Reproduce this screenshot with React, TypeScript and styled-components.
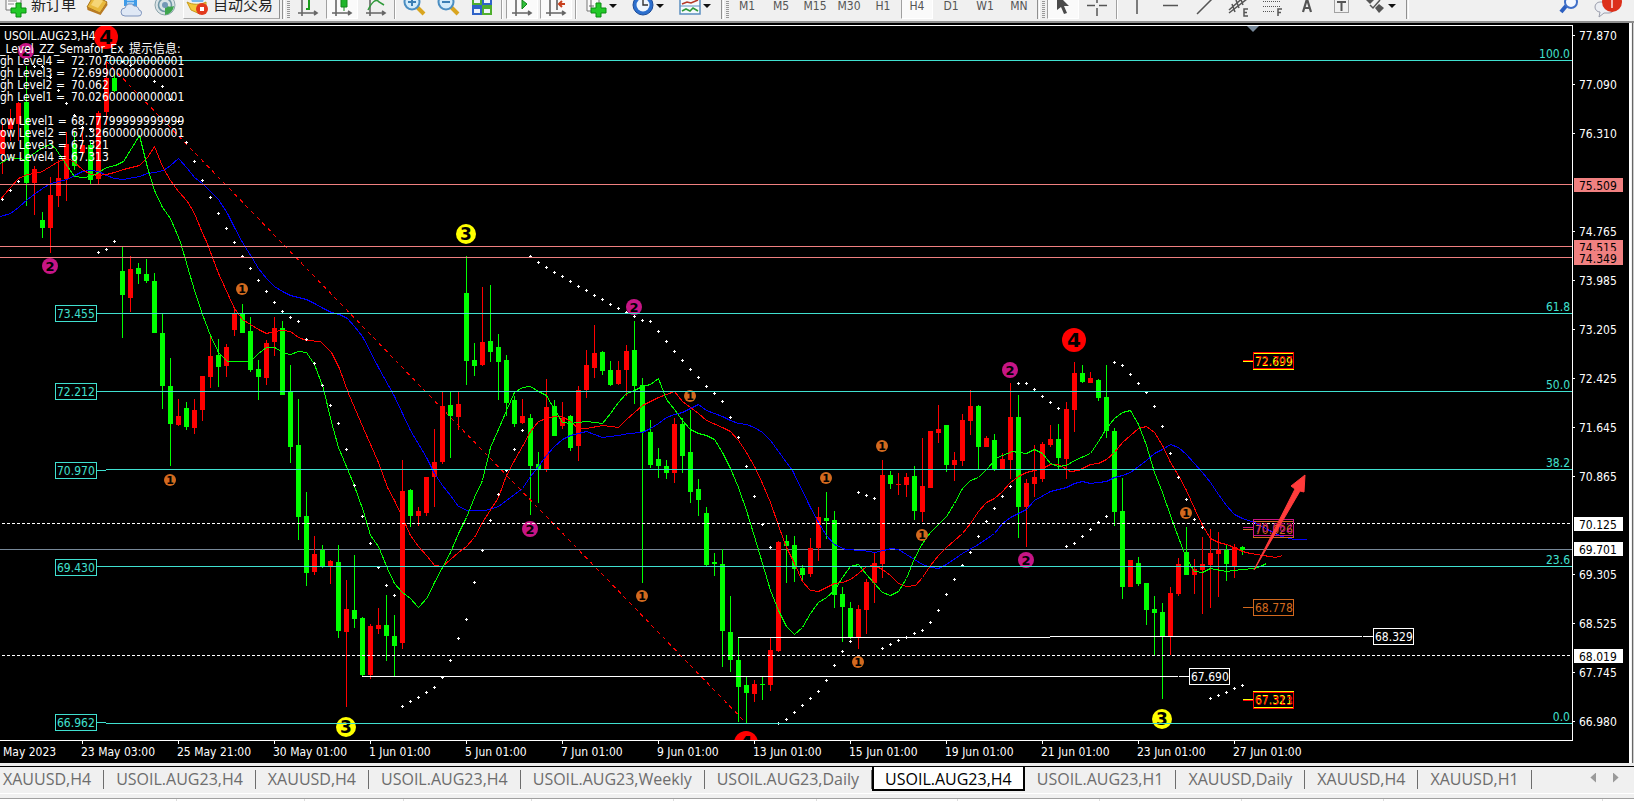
import React from "react";
import styled, { createGlobalStyle, css } from "styled-components";

const GlobalStyle = createGlobalStyle`
  * { box-sizing: border-box; }
  html, body, #root { height: 100%; }
  body { margin: 0; background: #f0f0f0; overflow: hidden; }
  button { font: inherit; color: inherit; }
`;

const UI_FONT = `"DejaVu Sans Condensed", "Noto Sans", "Noto Sans CJK SC", sans-serif`;

/* ---------- window frame ---------- */

const Window = styled.div`
  display: flex;
  flex-direction: column;
  min-height: 100vh;
  background: #f0f0f0;
  overflow: hidden;
`;

const Workspace = styled.main`
  display: grid;
  grid-template-columns: minmax(0, 1fr) 5px;
`;

const Edge = styled.div`
  background: linear-gradient(to right, #fff 0 2px, #f0f0f0 2px 3px, #666 3px 4px, #ccc 4px 5px);
`;

/* ---------- toolbar ---------- */

const Toolbar = styled.header`
  display: flex;
  align-items: flex-end;
  gap: 2px;
  height: 23px;
  padding-bottom: 2px;
  overflow: hidden;
  background: #f0f0f0;
  border-bottom: 2px solid #8f8f8f;
  font-family: ${UI_FONT};
  font-size: 12px;
  color: #555;
`;

const ToolButton = styled.button<{ $pressed?: boolean; $size?: "icon" | "menu" | "order" | "auto" }>`
  display: flex;
  align-items: center;
  justify-content: ${(p) => (p.$size === "icon" || !p.$size ? "center" : "flex-start")};
  flex: none;
  gap: ${(p) => (p.$size === "order" || p.$size === "auto" ? "3px" : "1px")};
  width: ${(p) => ({ icon: "32px", menu: "45px", order: "79px", auto: "97px" })[p.$size ?? "icon"]};
  height: 26px;
  padding: 0 4px;
  border: 0;
  background: none;
  ${(p) =>
    p.$size === "auto" &&
    css`
      border-right: 1px solid #8f8f8f;
      border-bottom: 1px solid #a8a8a8;
      border-left: 1px solid #fff;
      padding: 0 2px;
    `}
  ${(p) =>
    p.$pressed &&
    css`
      background: #fafafa;
      border-left: 1px solid #a0a0a0;
      border-right: 1px solid #fff;
      border-bottom: 1px solid #fff;
    `}
`;

const Caption = styled.span`
  font-family: "Noto Sans CJK SC", sans-serif;
  font-size: 15px;
  line-height: 20px;
  padding-bottom: 4px;
  color: #222;
  white-space: nowrap;
`;

const Separator = styled.span<{ $wide?: boolean }>`
  flex: none;
  width: 2px;
  height: 26px;
  margin: 0 ${(p) => (p.$wide ? 1 : 0)}px;
  border-left: 1px solid #a0a0a0;
  border-right: 1px solid #fff;
`;

const GroupEnd = styled.span`
  flex: none;
  width: 3px;
  height: 28px;
  border-left: 1px solid #909090;
  border-right: 1px solid #fff;
`;

const Grip = styled.span`
  flex: none;
  width: 3px;
  height: 26px;
  background: repeating-linear-gradient(to bottom, #999 0 1px, #f0f0f0 1px 2px);
`;

const Caret = styled.span`
  border: 4px solid transparent;
  border-top-color: #111;
  border-bottom: 0;
`;

const StatusTools = styled.div`
  display: flex;
  gap: 6px;
  margin-left: auto;
  padding-right: 12px;
`;

const IconSvg = styled.svg`
  display: block;
  flex: none;
  width: 24px;
  height: 24px;
`;

const Axes = () => (
  <path d="M6 0V22M2 19H20M18 17l3 2-3 2" fill="none" stroke="#666" strokeWidth="1.6" />
);

const icons = {
  order: (
    <>
      <path d="M2 0h11l4 4v12H2z" fill="#fafafa" stroke="#777" />
      <path d="M4 4h6M4 7h9M4 10h6" stroke="#888" />
      <path d="M12 9h5v5h5v5h-5v4h-5v-4H7v-5h5z" fill="#22c928" stroke="#0b8c12" />
    </>
  ),
  book: (
    <>
      <path d="M2 13L9 1l13 7-7 11z" fill="#e8b93c" stroke="#a8741a" />
      <path d="M2 13l13 6 7-11 .5 3-7 10L2.500 16z" fill="#b97a22" />
      <path d="M6 11l5-8 7 4-5 7z" fill="#f5d676" />
    </>
  ),
  cloud: (
    <>
      <path d="M5 0h13v12H5z" fill="#3f9be8" />
      <path d="M8 3h7M8 6h7M8 9h7" stroke="#fff" />
      <path d="M6 22a4 4 0 010-8 5 5 0 019-2 5 5 0 015 4 3 3 0 01-1 6z" fill="#dfe8f5" stroke="#7f95bd" />
    </>
  ),
  signal: (
    <>
      <circle cx="12" cy="11" r="10" fill="#d9e3e6" stroke="#8ba3aa" />
      <circle cx="12" cy="11" r="6.500" fill="none" stroke="#6f96a5" strokeWidth="1.600" />
      <path d="M12 11v10a10 10 0 009-9c-3 1-6 1-9-1z" fill="#3fa54e" />
      <circle cx="12" cy="11" r="3" fill="#7398b6" />
    </>
  ),
  auto: (
    <>
      <path d="M3 0h17l-3 8H6z" fill="#79b7ea" />
      <path d="M1 8c5 3 14 3 19 0v5l-6 7-9-4z" fill="#f3c83c" stroke="#c79a1a" />
      <circle cx="16" cy="15" r="6" fill="#e23a1e" />
      <path d="M14 13h4v4h-4z" fill="#fff" />
    </>
  ),
  bars: (
    <>
      <Axes />
      <path d="M13 2v14M13 5h4M10 15h3" stroke="#1a9b1a" strokeWidth="2" />
    </>
  ),
  candles: (
    <>
      <Axes />
      <path d="M14 0v17" stroke="#14841a" />
      <path d="M11 1h6v12h-6z" fill="#1fb52a" stroke="#14841a" />
    </>
  ),
  line: (
    <>
      <Axes />
      <path d="M4 16c4-8 8-12 11-8l5 3" fill="none" stroke="#2f9a3a" strokeWidth="1.500" />
    </>
  ),
  zoomIn: (
    <>
      <path d="M15 13l7 7" stroke="#d9a520" strokeWidth="4" />
      <circle cx="10" cy="8" r="7.500" fill="#d3ecfb" stroke="#4b8ec2" strokeWidth="2" />
      <path d="M6 8h8M10 4v8" stroke="#3b7fb5" strokeWidth="2" />
    </>
  ),
  zoomOut: (
    <>
      <path d="M15 13l7 7" stroke="#d9a520" strokeWidth="4" />
      <circle cx="10" cy="8" r="7.500" fill="#d3ecfb" stroke="#4b8ec2" strokeWidth="2" />
      <path d="M6 8h8" stroke="#3b7fb5" strokeWidth="2" />
    </>
  ),
  tile: (
    <>
      <path d="M2 1h10v10H2zM12 11h10v10H12z" fill="#4fae2e" />
      <path d="M12 1h10v10H12zM2 11h10v10H2z" fill="#2f62c8" />
      <path d="M4 6h6v3H4zM14 6h6v3h-6zM4 15h6v4H4zM14 15h6v4h-6z" fill="#eef4fb" />
    </>
  ),
  scroll: (
    <>
      <Axes />
      <path d="M12 6v9l5-5z" fill="#2fbf3a" stroke="#14841a" />
    </>
  ),
  shift: (
    <>
      <Axes />
      <path d="M13 2v14" stroke="#555" strokeWidth="1.500" />
      <path d="M21 10h-5M18 7l-3 3 3 3" fill="none" stroke="#c8401e" strokeWidth="2" />
    </>
  ),
  indicator: (
    <>
      <path d="M3 0h12v17H3z" fill="#fafafa" stroke="#777" />
      <path d="M7 2v12M5 12h5" stroke="#666" />
      <path d="M12 9h5v5h5v5h-5v4h-5v-4H7v-5h5z" fill="#22c928" stroke="#0b8c12" />
    </>
  ),
  clock: (
    <>
      <circle cx="12" cy="11" r="10" fill="#2c6fce" stroke="#1d4c98" />
      <circle cx="12" cy="11" r="6.500" fill="#eef5fc" />
      <path d="M12 6v5h5" fill="none" stroke="#333" strokeWidth="1.400" />
    </>
  ),
  template: (
    <>
      <path d="M2 1h20v19H2z" fill="#f5fafd" stroke="#5b8fc0" strokeWidth="1.500" />
      <path d="M4 10l5-2 4 1 7-3" fill="none" stroke="#b53a28" strokeWidth="1.600" />
      <path d="M2 12h20" stroke="#5b8fc0" />
      <path d="M4 17l4-2 4 2 3-3 5 3" fill="none" stroke="#2f9a3a" strokeWidth="1.600" />
    </>
  ),
  cursor: <path d="M6 0v16l4-3 3 7 3-1-3-7h5z" fill="#4a4a4a" />,
  cross: <path d="M12 0v9M12 14v8M2 11.500h8M14 11.500h8" stroke="#555" strokeWidth="1.500" />,
  vline: <path d="M12 0v20" stroke="#555" strokeWidth="1.500" />,
  hline: <path d="M4 11.500h15" stroke="#555" strokeWidth="1.500" />,
  diagonal: <path d="M4 20L20 4" stroke="#555" strokeWidth="1.500" />,
  channel: (
    <>
      <path d="M2 16L18 2M2 19L20 5M5 10l3 8M9 6l3 8M13 3l3 8" stroke="#555" strokeWidth="1.500" />
      <path d="M21 15h-4v7h4M17 18.500h3" fill="none" stroke="#555" strokeWidth="1.500" />
    </>
  ),
  fibo: (
    <>
      <path d="M2 7.500h18M2 12.500h18M2 17.500h12" stroke="#555" strokeDasharray="1 1" />
      <path d="M21 15h-4v7M17 18.500h3" fill="none" stroke="#555" strokeWidth="1.500" />
    </>
  ),
  letter: <path d="M8 18l4-13 4 13M9 14h6" fill="none" stroke="#555" strokeWidth="2.200" />,
  label: (
    <>
      <rect x="5.500" y="4.500" width="14" height="14" fill="none" stroke="#555" strokeDasharray="1 1" />
      <path d="M8 8h9M12.500 8v9" stroke="#555" strokeWidth="2" />
    </>
  ),
  arrows: (
    <>
      <path d="M7 2l4 4-4 4-4-4zM16 10l5 4-5 5-4-5z" fill="#555" />
      <path d="M7 11l3 3 7-8" fill="none" stroke="#555" strokeWidth="1.500" />
    </>
  ),
  search: (
    <>
      <path d="M10 12l-5 6" stroke="#2c5fc0" strokeWidth="4" />
      <circle cx="15" cy="8" r="6" fill="#f4f8ff" stroke="#3f6fc8" strokeWidth="2" />
    </>
  ),
  alert: (
    <>
      <path d="M6 8h9a5 5 0 010 11h-5l-5 4 1-5a5 5 0 010-10z" fill="#eceef3" stroke="#9a9dab" />
      <circle cx="18" cy="8" r="10" fill="#dc2f1a" />
      <path d="M17 4h1v10" fill="none" stroke="#fff" strokeWidth="1.300" />
    </>
  ),
};

type IconName = keyof typeof icons;

const Icon = ({ name }: { name: IconName }) => (
  <IconSvg viewBox="0 0 24 24" aria-hidden="true" overflow="visible">
    {icons[name]}
  </IconSvg>
);

const Tool = ({ icon, pressed, menu }: { icon: IconName; pressed?: boolean; menu?: boolean }) => (
  <ToolButton type="button" aria-label={icon} $pressed={pressed} $size={menu ? "menu" : "icon"}>
    <Icon name={icon} />
    {menu && <Caret />}
  </ToolButton>
);

const TIMEFRAMES = ["M1", "M5", "M15", "M30", "H1", "H4", "D1", "W1", "MN"];

/* ---------- chart ---------- */

const TURQUOISE = "#40e0d0";
const SALMON = "#f08080";
const SLATE = "#778899";
const CHOCOLATE = "#d2691e";
const VIOLET = "#c71585";

const Chart = styled.svg`
  display: block;
  width: 100%;
  height: auto;
  background: #000;
  font-family: ${UI_FONT};
  font-size: 12px;
  fill: #fff;
`;

const ChartText = styled.text`
  white-space: pre;
`;

const MarkDigit = styled.text`
  font-family: "DejaVu Sans", sans-serif;
  font-weight: 700;
  text-anchor: middle;
  fill: #000;
`;

type Candle = [up: 0 | 1, high: number, top: number, bottom: number, low: number];

/* one entry per bar, eight pixels apart; 1 = rising (red), 0 = falling (green) */
const CANDLES: Candle[] = [
  [1,122,130,154,174],[1,109,119,129,141],[1,102,103,124,141],[0,66,102,183,206],[1,166,169,183,215],
  [0,212,220,228,238],[1,177,195,228,253],[1,160,178,196,207],[1,132,144,179,201],[0,132,144,166,170],
  [1,128,145,153,157],[0,141,145,180,184],[1,111,113,179,184],[1,61,78,112,125],[0,73,78,91,92],
  [0,247,271,295,338],[1,256,269,298,312],[0,263,268,274,284],[0,259,274,281,283],[0,273,281,333,333],
  [0,314,333,386,409],[0,358,386,424,466],[1,399,416,425,426],[0,402,408,427,430],[1,399,410,428,434],
  [1,376,376,410,421],[1,335,356,377,388],[0,339,355,367,387],[1,344,347,366,377],[1,309,314,330,336],
  [0,304,314,333,333],[0,317,331,370,372],[0,360,369,377,400],[1,340,343,378,385],[1,317,328,342,356],
  [0,321,328,395,395],[0,365,392,447,463],[0,399,445,517,540],[0,492,516,573,586],[1,536,554,572,575],
  [0,545,550,566,568],[1,560,561,566,584],[0,545,562,631,638],[1,580,609,632,707],[0,555,610,619,628],
  [0,617,618,675,676],[1,624,626,675,679],[1,608,625,629,634],[0,595,625,636,661],[0,615,636,646,676],
  [1,460,491,643,649],[0,489,490,516,527],[1,507,511,516,526],[1,477,477,513,516],[1,429,462,477,507],
  [1,392,406,462,464],[0,392,405,416,458],[1,392,404,417,430],[0,256,293,361,385],[0,343,360,366,376],
  [1,287,342,365,366],[0,285,341,352,362],[0,334,347,362,400],[0,355,360,403,416],[0,396,400,424,427],
  [1,399,416,423,424],[0,414,418,466,515],[0,452,464,470,503],[1,379,407,470,472],[0,400,406,436,436],
  [1,402,418,426,429],[0,415,416,448,451],[1,386,390,446,461],[1,350,365,390,398],[1,325,353,368,378],
  [0,351,352,371,375],[0,361,370,385,386],[1,361,370,384,385],[1,345,351,370,396],[0,321,350,386,404],
  [0,378,385,432,583],[0,420,432,465,468],[0,448,459,466,478],[0,460,466,473,479],[1,418,424,473,483],
  [0,418,424,456,473],[0,410,452,492,503],[0,479,489,500,516],[0,507,513,565,566],[0,553,562,564,576],
  [0,549,564,631,667],[0,596,632,660,672],[0,637,660,687,722],[0,677,685,693,723],[1,680,684,694,702],
  [0,677,684,685,700],[1,638,650,685,691],[1,541,542,651,652],[0,535,541,546,583],[0,536,545,569,582],
  [0,565,568,575,582],[1,538,548,574,577],[1,507,517,548,561],[0,492,518,521,539],[0,511,520,595,608],
  [0,587,594,607,642],[0,602,608,637,639],[1,605,609,637,649],[1,579,582,610,634],[1,553,563,583,603],
  [1,460,475,564,578],[0,471,475,484,489],[1,473,484,485,495],[1,473,477,485,497],[0,466,476,511,520],
  [1,438,486,512,522],[1,431,431,488,488],[1,405,429,433,443],[0,425,425,465,472],[1,452,460,465,481],
  [1,414,420,461,466],[1,390,406,421,435],[0,405,406,447,469],[1,436,438,447,447],[0,434,440,470,471],
  [1,453,459,469,469],[1,383,417,460,479],[0,395,417,507,538],[1,479,483,507,547],[1,445,477,484,497],
  [1,442,444,479,482],[1,425,439,445,447],[0,424,439,458,469],[1,402,409,459,479],[1,362,373,410,432],
  [0,365,373,382,383],[1,372,378,383,383],[0,379,380,398,401],[0,365,397,431,438],[0,428,431,512,526],
  [0,478,511,587,599],[1,560,560,587,587],[0,557,563,584,586],[0,583,583,610,625],[0,596,609,613,655],
  [0,603,612,636,699],[1,587,593,636,655],[1,558,564,594,596],[0,527,552,575,575],[1,559,569,575,594],
  [1,537,564,570,614],[1,529,553,565,608],[1,532,550,554,597],[0,544,550,564,581],[1,544,547,566,578],
  [0,546,547,550,555],
];

const AVERAGES = [
  {
    color: "#0000ff",
    points:
      "0,216 10,213 18,207 27,199 35,193 42,188 50,183 67,179 74,175 82,171 90,170 98,171 106,175 114,178 123,179 139,176 147,173 154,172 163,170 170,165 178,158 187,168 194,177 202,183 210,191 218,199 227,213 234,227 242,242 252,258 258,268 266,278 274,286 282,291 290,295 298,297 306,299 314,303 323,308 331,312 339,314 347,318 354,326 362,336 378,367 394,396 410,430 426,457 434,473 442,485 450,495 458,506 467,510 485,510 498,506 506,500 514,494 522,488 530,476 538,466 546,455 554,446 562,439 570,435 578,433 586,431 594,434 602,437 610,436 618,435 628,433 642,432 650,428 658,423 666,417 674,414 682,412 690,408 698,404 706,410 714,413 722,416 730,420 738,423 746,424 754,427 762,432 770,440 778,451 786,462 792,470 810,507 818,522 826,535 834,544 845,549 862,550 874,552 883,550 891,548 898,549 906,554 914,559 922,564 930,567 938,568 946,564 962,553 978,544 994,533 1002,523 1010,517 1026,509 1034,500 1050,491 1066,487 1074,483 1082,481 1090,483 1106,481 1114,477 1122,475 1130,472 1138,466 1146,460 1154,453 1162,449 1170,444 1178,447 1186,454 1194,463 1202,472 1210,482 1218,494 1226,505 1234,514 1242,518 1254,522 1267,529 1281,536 1294,539 1306,539",
  },
  {
    color: "#ff0000",
    points:
      "0,199 10,187 18,178 27,174 40,172 50,166 60,160 68,158 74,162 82,169 90,174 98,175 106,174 114,172 123,169 139,165 147,157 154,146 162,166 170,180 178,191 187,201 194,213 203,235 206,241 218,273 234,308 242,319 250,324 258,329 266,333 274,331 282,330 290,331 298,337 306,340 320,341 331,352 339,368 348,393 363,428 378,462 387,487 394,500 402,517 410,535 418,546 427,556 434,565 442,566 450,559 458,552 466,546 474,537 482,522 498,497 506,475 514,460 522,446 530,431 538,421 546,418 554,416 562,416 570,421 578,428 586,428 602,425 618,427 626,419 634,412 642,405 650,401 658,397 674,391 682,401 690,407 698,413 706,420 722,427 730,431 738,440 746,452 754,466 762,483 770,502 778,525 786,547 794,563 802,581 810,590 818,591 834,583 842,582 850,579 858,573 866,566 874,565 882,569 890,575 898,583 906,586 915,585 922,577 930,565 938,555 946,547 962,533 970,523 978,511 986,502 994,498 1002,491 1010,482 1018,476 1026,472 1034,470 1042,468 1050,464 1058,464 1063,467 1070,471 1078,470 1090,464 1098,463 1106,459 1114,452 1122,442 1130,435 1138,428 1146,426 1154,432 1162,445 1170,462 1178,475 1186,490 1194,508 1202,525 1210,538 1218,542 1226,544 1234,547 1242,551 1250,553 1263,555 1275,557 1282,555",
  },
  {
    color: "#00ff00",
    points:
      "0,163 10,157 25,159 42,147 50,144 55,148 67,166 74,176 82,177 91,176 98,172 106,167 115,165 123,161 139,135 147,167 154,190 162,207 170,218 178,237 180,242 194,290 202,314 210,335 218,352 227,361 250,361 258,353 266,347 274,347 285,353 290,354 298,351 306,352 314,364 323,388 330,418 338,447 353,483 363,511 370,535 378,546 387,568 394,583 402,592 410,598 418,607 427,597 434,582 442,567 450,552 458,533 466,517 474,497 482,480 490,447 498,429 506,410 514,392 522,387 530,386 538,391 546,395 554,409 562,422 570,423 586,421 602,423 610,413 618,402 626,393 634,390 642,386 650,384 658,378 666,399 674,409 682,420 690,429 698,433 706,435 714,439 722,452 730,468 738,487 746,510 754,536 762,563 770,590 778,610 786,626 794,634 802,627 810,613 818,602 826,597 834,590 842,577 850,566 858,564 866,574 874,583 882,592 890,595 898,591 906,578 914,558 922,543 930,532 946,516 954,503 962,488 970,480 978,477 986,469 997,457 1012,451 1018,452 1026,453 1034,449 1042,453 1050,463 1058,466 1066,465 1074,460 1090,453 1098,441 1106,428 1114,418 1122,412 1130,410 1138,424 1146,445 1154,472 1162,492 1170,515 1178,537 1186,558 1194,571 1202,572 1210,568 1226,571 1242,569 1254,568 1260,566 1266,563",
  },
];

/* parabolic SAR: runs of dots, each starting at a bar index */
const SAR: [start: number, ys: number[]][] = [
  [0, [199, 190, 181]],
  [4, [66, 66, 77, 90, 103, 115, 127, 129]],
  [12, [252, 249, 241]],
  [15, [61,65,70,76,81,86,99,121,142,161,180,197,213,228,242,256,268,280,291,302,311,317,321,339,363,385,405,423,449,485,516,543,567,585,595]],
  [50, [706,701,697,692,687,677,660,638,619,582,550,520,494,470,449,430]],
  [66, [256,262,267,272,276,281,286,290,295,299,304,308,312,316,320,321,331,341,351,360,369,377,386,393,401,417,437,466,496,524,547]],
  [97, [723,719,712,705,698,691,680,665,651,641]],
  [107, [492, 495, 498]],
  [110, [648,644,640,637,633,630,622,610,594,579,565,552,536,521,508,496,486]],
  [127, [383, 383, 389, 396, 402, 408]],
  [133, [546, 543, 536, 529, 522, 516]],
  [139, [362,365,374,383,392,406,426,453,477,499,519,527]],
  [151, [698, 695, 692, 688, 685]],
];

const MARK_STYLE = {
  1: { r: 6, size: 11, color: CHOCOLATE },
  2: { r: 8, size: 13, color: VIOLET },
  3: { r: 10, size: 17, color: "#ffff00" },
  4: { r: 12, size: 20, color: "#ff0000" },
} as const;

const MARKS: [level: 1 | 2 | 3 | 4, x: number, y: number][] = [
  [1, 242, 289], [1, 170, 480], [1, 642, 596], [1, 690, 396], [1, 826, 478], [1, 858, 662],
  [1, 882, 446], [1, 922, 535], [1, 1186, 513],
  [2, 50, 266], [2, 26, 51], [2, 634, 307], [2, 530, 529], [2, 1010, 370], [2, 1026, 560],
  [3, 466, 234], [3, 346, 727], [3, 1162, 719],
  [4, 106, 37], [4, 1074, 340], [4, 746, 743],
];

const FIB_LEVELS = [
  { y: 60, from: 106, label: "100.0" },
  { y: 313, from: 97, label: "61.8", price: "73.455", box: 305 },
  { y: 391, from: 97, label: "50.0", price: "72.212", box: 383 },
  { y: 469, from: 106, label: "38.2", price: "70.970", box: 462 },
  { y: 566, from: 97, label: "23.6", price: "69.430", box: 559 },
  { y: 723, from: 106, label: "0.0", price: "66.962", box: 714 },
];

const RIGHT_TAGS = [
  { x: 1253, y: 353, text: "72.699", color: "#ffff00" },
  { x: 1253, y: 352, text: "72.707", color: "#ff0000" },
  { x: 1253, y: 521, text: "70.026", color: CHOCOLATE },
  { x: 1253, y: 519, text: "70.062", color: VIOLET },
  { x: 1253, y: 599, text: "68.778", color: CHOCOLATE },
  { x: 1253, y: 691, text: "67.321", color: "#ffff00" },
  { x: 1253, y: 692, text: "67.313", color: "#ff0000" },
  { x: 1373, y: 628, text: "68.329", color: "#ffffff" },
  { x: 1189, y: 668, text: "67.690", color: "#ffffff" },
];

const PRICES: [string, number][] = [
  ["77.870", 35], ["77.090", 84], ["76.310", 133], ["74.765", 231], ["73.985", 280], ["73.205", 329],
  ["72.425", 378], ["71.645", 427], ["70.865", 476], ["69.305", 574], ["68.525", 623], ["67.745", 672],
  ["66.980", 721],
];

const PRICE_FLAGS: [string, number, string][] = [
  ["75.509", 185, SALMON], ["74.515", 247, SALMON], ["74.349", 258, SALMON],
  ["70.125", 524, "#fff"], ["69.701", 549, "#fff"], ["68.019", 656, "#fff"],
];

const TIMES = [
  "23 May 03:00", "25 May 21:00", "30 May 01:00", "1 Jun 01:00", "5 Jun 01:00", "7 Jun 01:00", "9 Jun 01:00",
  "13 Jun 01:00", "15 Jun 01:00", "19 Jun 01:00", "21 Jun 01:00", "23 Jun 01:00", "27 Jun 01:00",
];

const TITLES: [string, number, number][] = [
  ["USOIL.AUG23,H4", 4, 40],
  ["_Level_ZZ_Semafor_Ex", 0, 53],
  ["提示信息:", 129, 53],
];

/* indicator read-out: label and value columns */
const READOUT: [label: string, value: string, y: number][] = [
  ["gh Level4 =", "72.70700000000001", 65],
  ["gh Level3 =", "72.69900000000001", 77],
  ["gh Level2 =", "70.062", 89],
  ["gh Level1 =", "70.02600000000001", 101],
  ["ow Level1 =", "68.77799999999999", 125],
  ["ow Level2 =", "67.32600000000001", 137],
  ["ow Level3 =", "67.321", 149],
  ["ow Level4 =", "67.313", 161],
];

const barX = (index: number) => 2 + index * 8;

const HLine = ({ x = 0, to = 1572, y, color }: { x?: number; to?: number; y: number; color: string }) => (
  <rect x={x} y={y} width={to - x} height="1" fill={color} />
);

const PriceTag = ({ x, y, text, color, width = 41 }: { x: number; y: number; text: string; color: string; width?: number }) => (
  <g fill={color}>
    <rect x={x + 0.5} y={y + 0.5} width={width - 1} height="16" fill="none" stroke={color} />
    <ChartText x={x + 2} y={y + 13}>{text}</ChartText>
  </g>
);

const PriceChart = () => (
  <Chart viewBox="0 23 1629 740" role="img" aria-label="USOIL.AUG23,H4">
    <defs>
      <clipPath id="plot">
        <rect x="0" y="26" width="1572" height="714" />
      </clipPath>
    </defs>

    <g clipPath="url(#plot)">
      <g shapeRendering="crispEdges">
        <HLine y={549} color={SLATE} />
        {CANDLES.map(([up, high, top, bottom, low], i) => (
          <g key={i} fill={up ? "#ff0000" : "#00ff00"}>
            <rect x={barX(i)} y={high} width="1" height={Math.max(low - high, 1)} />
            <rect x={barX(i) - 2} y={top} width="5" height={Math.max(bottom - top, 1)} />
          </g>
        ))}
        <g transform="translate(.5 .5)" fill="none">
          {AVERAGES.map((line) => (
            <polyline key={line.color} points={line.points} stroke={line.color} />
          ))}
          <path d="M106 61L746 723" stroke="#ff0000" strokeDasharray="4 4" />
        </g>
        {SAR.map(([start, ys]) =>
          ys.map((y, k) => {
            const x = barX(start + k);
            return <path key={x} d={`M${x - 1} ${y}h3v1h-3zM${x} ${y - 1}h1v3h-1z`} />;
          }),
        )}
      </g>

      {MARKS.map(([level, x, y]) => {
        const { r, size, color } = MARK_STYLE[level];
        return (
          <g key={`${x}-${y}`}>
            <circle cx={x} cy={y} r={r} fill={color} />
            <MarkDigit x={x} y={y + Math.round(size * 0.37)} fontSize={size}>{level}</MarkDigit>
          </g>
        );
      })}

      <g shapeRendering="crispEdges">
        {[184, 246, 257].map((y) => (
          <HLine key={y} y={y} color={SALMON} />
        ))}
        {FIB_LEVELS.map((level) => (
          <HLine key={level.y} x={level.from} y={level.y} color={TURQUOISE} />
        ))}
        <HLine x={97} to={106} y={470} color={TURQUOISE} />
        <HLine x={97} to={106} y={722} color={TURQUOISE} />
        <path d="M2 523.5H1572M2 655.5H1572" stroke="#fff" strokeDasharray="3 2" fill="none" />
        <HLine x={738} to={1050} y={637} color="#fff" />
        <HLine x={1050} to={1362} y={636} color="#fff" />
        <HLine x={1363} to={1373} y={636} color="#fff" />
        <HLine x={362} to={1178} y={676} color="#fff" />
        <HLine x={1179} to={1189} y={676} color="#fff" />
        <HLine x={1243} to={1253} y={360} color="#ff0000" />
        <HLine x={1243} to={1253} y={361} color="#ffff00" />
        <HLine x={1243} to={1253} y={527} color={VIOLET} />
        <HLine x={1243} to={1253} y={529} color={CHOCOLATE} />
        <HLine x={1243} to={1253} y={607} color={CHOCOLATE} />
        <HLine x={1243} to={1253} y={699} color="#ffff00" />
        <HLine x={1243} to={1253} y={700} color="#ff0000" />
      </g>

      {FIB_LEVELS.map((level) => (
        <g key={level.label} fill={TURQUOISE}>
          <ChartText x="1570" y={level.y - 2} textAnchor="end">{level.label}</ChartText>
          {level.price && <PriceTag x={55} y={level.box} text={level.price} color={TURQUOISE} width={42} />}
        </g>
      ))}
      {RIGHT_TAGS.map((tag) => (
        <PriceTag key={tag.text} {...tag} />
      ))}
      {TITLES.map(([text, x, y]) => (
        <ChartText key={text} x={x} y={y}>{text}</ChartText>
      ))}
      {READOUT.map(([label, value, y]) => (
        <ChartText key={y} y={y}>
          <tspan x="0">{label}</tspan>
          <tspan x="71">{value}</tspan>
        </ChartText>
      ))}
      <path d="M1247 26h12l-6 6z" fill={SLATE} />
      <path
        d="M1254 570L1295 489L1291 486L1305 475L1304 492L1300 491Z"
        fill="#ff3b3b"
        stroke="#ff3b3b"
        strokeLinejoin="round"
      />
    </g>

    <g shapeRendering="crispEdges">
      <path d="M0 25H1573V741H0V740H1572V26H0Z" />
      {PRICES.map(([price, y]) => (
        <rect key={price} x="1573" y={y} width="2" height="1" />
      ))}
      {TIMES.map((time, i) => (
        <rect key={time} x={82 + i * 96} y="741" width="1" height="3" />
      ))}
    </g>
    {PRICES.map(([price, y]) => (
      <ChartText key={price} x="1579" y={y + 5}>{price}</ChartText>
    ))}
    {PRICE_FLAGS.map(([price, y, color]) => (
      <g key={price}>
        <rect x="1574" y={y - 7} width="49" height="14" fill={color} />
        <ChartText x="1579" y={y + 5} fill="#000">{price}</ChartText>
      </g>
    ))}
    <ChartText x="3" y="756">May 2023</ChartText>
    {TIMES.map((time, i) => (
      <ChartText key={time} x={81 + i * 96} y="756">{time}</ChartText>
    ))}
  </Chart>
);

/* ---------- chart tabs and lower pane ---------- */

const TabStrip = styled.nav`
  display: flex;
  height: 28px;
  padding-bottom: 3px;
  border-top: 1px solid #000;
  box-shadow: 0 -3px 0 #ececec;
  margin-top: 3px;
  border-bottom: 1px solid #fff;
  background: #f0f0f0;
  font-family: "Open Sans", "Noto Sans", sans-serif;
  font-size: 16px;
  line-height: 20px;
  color: #6d6d6d;
`;

const Tab = styled.button<{ $active?: boolean; $first?: boolean }>`
  flex: none;
  position: relative;
  height: 24px;
  padding: 0 13px 0 ${(p) => (p.$first ? 3 : 12)}px;
  border: 0;
  background: none;
  white-space: nowrap;
  ${(p) =>
    p.$active
      ? css`
          background: #fff;
          color: #000;
          border: 2px solid #000;
          border-top: 0;
          padding: 2px 11px 0;
        `
      : css`
          &::after {
            content: "";
            position: absolute;
            top: 3px;
            right: 0;
            height: 19px;
            border-right: 1px solid #6d6d6d;
          }
        `}
`;

const TabScroll = styled.span`
  display: flex;
  align-items: center;
  gap: 17px;
  margin-left: auto;
  padding: 0 14px 2px 0;
`;

const ScrollButton = styled.button<{ $dir: "left" | "right" }>`
  width: 7px;
  height: 10px;
  padding: 0;
  border: 0;
  background: #9a9a9a;
  clip-path: ${(p) => (p.$dir === "left" ? "polygon(100% 0, 100% 100%, 20% 50%)" : "polygon(0 0, 0 100%, 80% 50%)")};
`;

const TABS = [
  "XAUUSD,H4", "USOIL.AUG23,H4", "XAUUSD,H4", "USOIL.AUG23,H4", "USOIL.AUG23,Weekly", "USOIL.AUG23,Daily",
  "USOIL.AUG23,H4", "USOIL.AUG23,H1", "XAUUSD,Daily", "XAUUSD,H4", "XAUUSD,H1",
];
const ACTIVE_TAB = 6;

const Terminal = styled.section`
  display: grid;
  grid-template-columns: 177px 128px 99px 128px 142px 143px 141px 142px 142px 142px 1fr 31px;
  flex: 1;
  min-height: 5px;
  margin-top: 4px;
  border-top: 1px solid #a0a0a0;
  background: #fff;
`;

const TerminalColumn = styled.div`
  border-right: 1px solid #ddd;
`;

export default function App() {
  return (
    <Window>
      <GlobalStyle />
      <Toolbar>
        <ToolButton type="button" $size="order">
          <Icon name="order" />
          <Caption>新订单</Caption>
        </ToolButton>
        <Tool icon="book" />
        <Tool icon="cloud" />
        <Tool icon="signal" />
        <ToolButton type="button" $size="auto">
          <Icon name="auto" />
          <Caption>自动交易</Caption>
        </ToolButton>
        <GroupEnd />
        <Grip />
        <Tool icon="bars" />
        <Tool icon="candles" pressed />
        <Tool icon="line" />
        <Separator />
        <Tool icon="zoomIn" />
        <Tool icon="zoomOut" />
        <Tool icon="tile" />
        <Separator $wide />
        <Tool icon="scroll" pressed />
        <Tool icon="shift" pressed />
        <Separator $wide />
        <Tool icon="indicator" menu />
        <Tool icon="clock" menu />
        <Tool icon="template" menu />
        <GroupEnd />
        <Grip />
        {TIMEFRAMES.map((frame) => (
          <ToolButton type="button" key={frame} $pressed={frame === "H4"}>
            {frame}
          </ToolButton>
        ))}
        <GroupEnd />
        <Grip />
        <Tool icon="cursor" pressed />
        <Tool icon="cross" />
        <Separator $wide />
        <Tool icon="vline" />
        <Tool icon="hline" />
        <Tool icon="diagonal" />
        <Tool icon="channel" />
        <Tool icon="fibo" />
        <Tool icon="letter" />
        <Tool icon="label" />
        <Tool icon="arrows" menu />
        <GroupEnd />
        <StatusTools>
          <Tool icon="search" />
          <Tool icon="alert" />
        </StatusTools>
      </Toolbar>

      <Workspace>
        <PriceChart />
        <Edge />
      </Workspace>

      <TabStrip>
        {TABS.map((tab, i) => (
          <Tab type="button" key={i} $first={i === 0} $active={i === ACTIVE_TAB}>
            {tab}
          </Tab>
        ))}
        <TabScroll>
          <ScrollButton type="button" aria-label="Previous tabs" $dir="left" />
          <ScrollButton type="button" aria-label="Next tabs" $dir="right" />
        </TabScroll>
      </TabStrip>

      <Terminal>
        {Array.from({ length: 11 }, (_, i) => (
          <TerminalColumn key={i} />
        ))}
      </Terminal>
    </Window>
  );
}
